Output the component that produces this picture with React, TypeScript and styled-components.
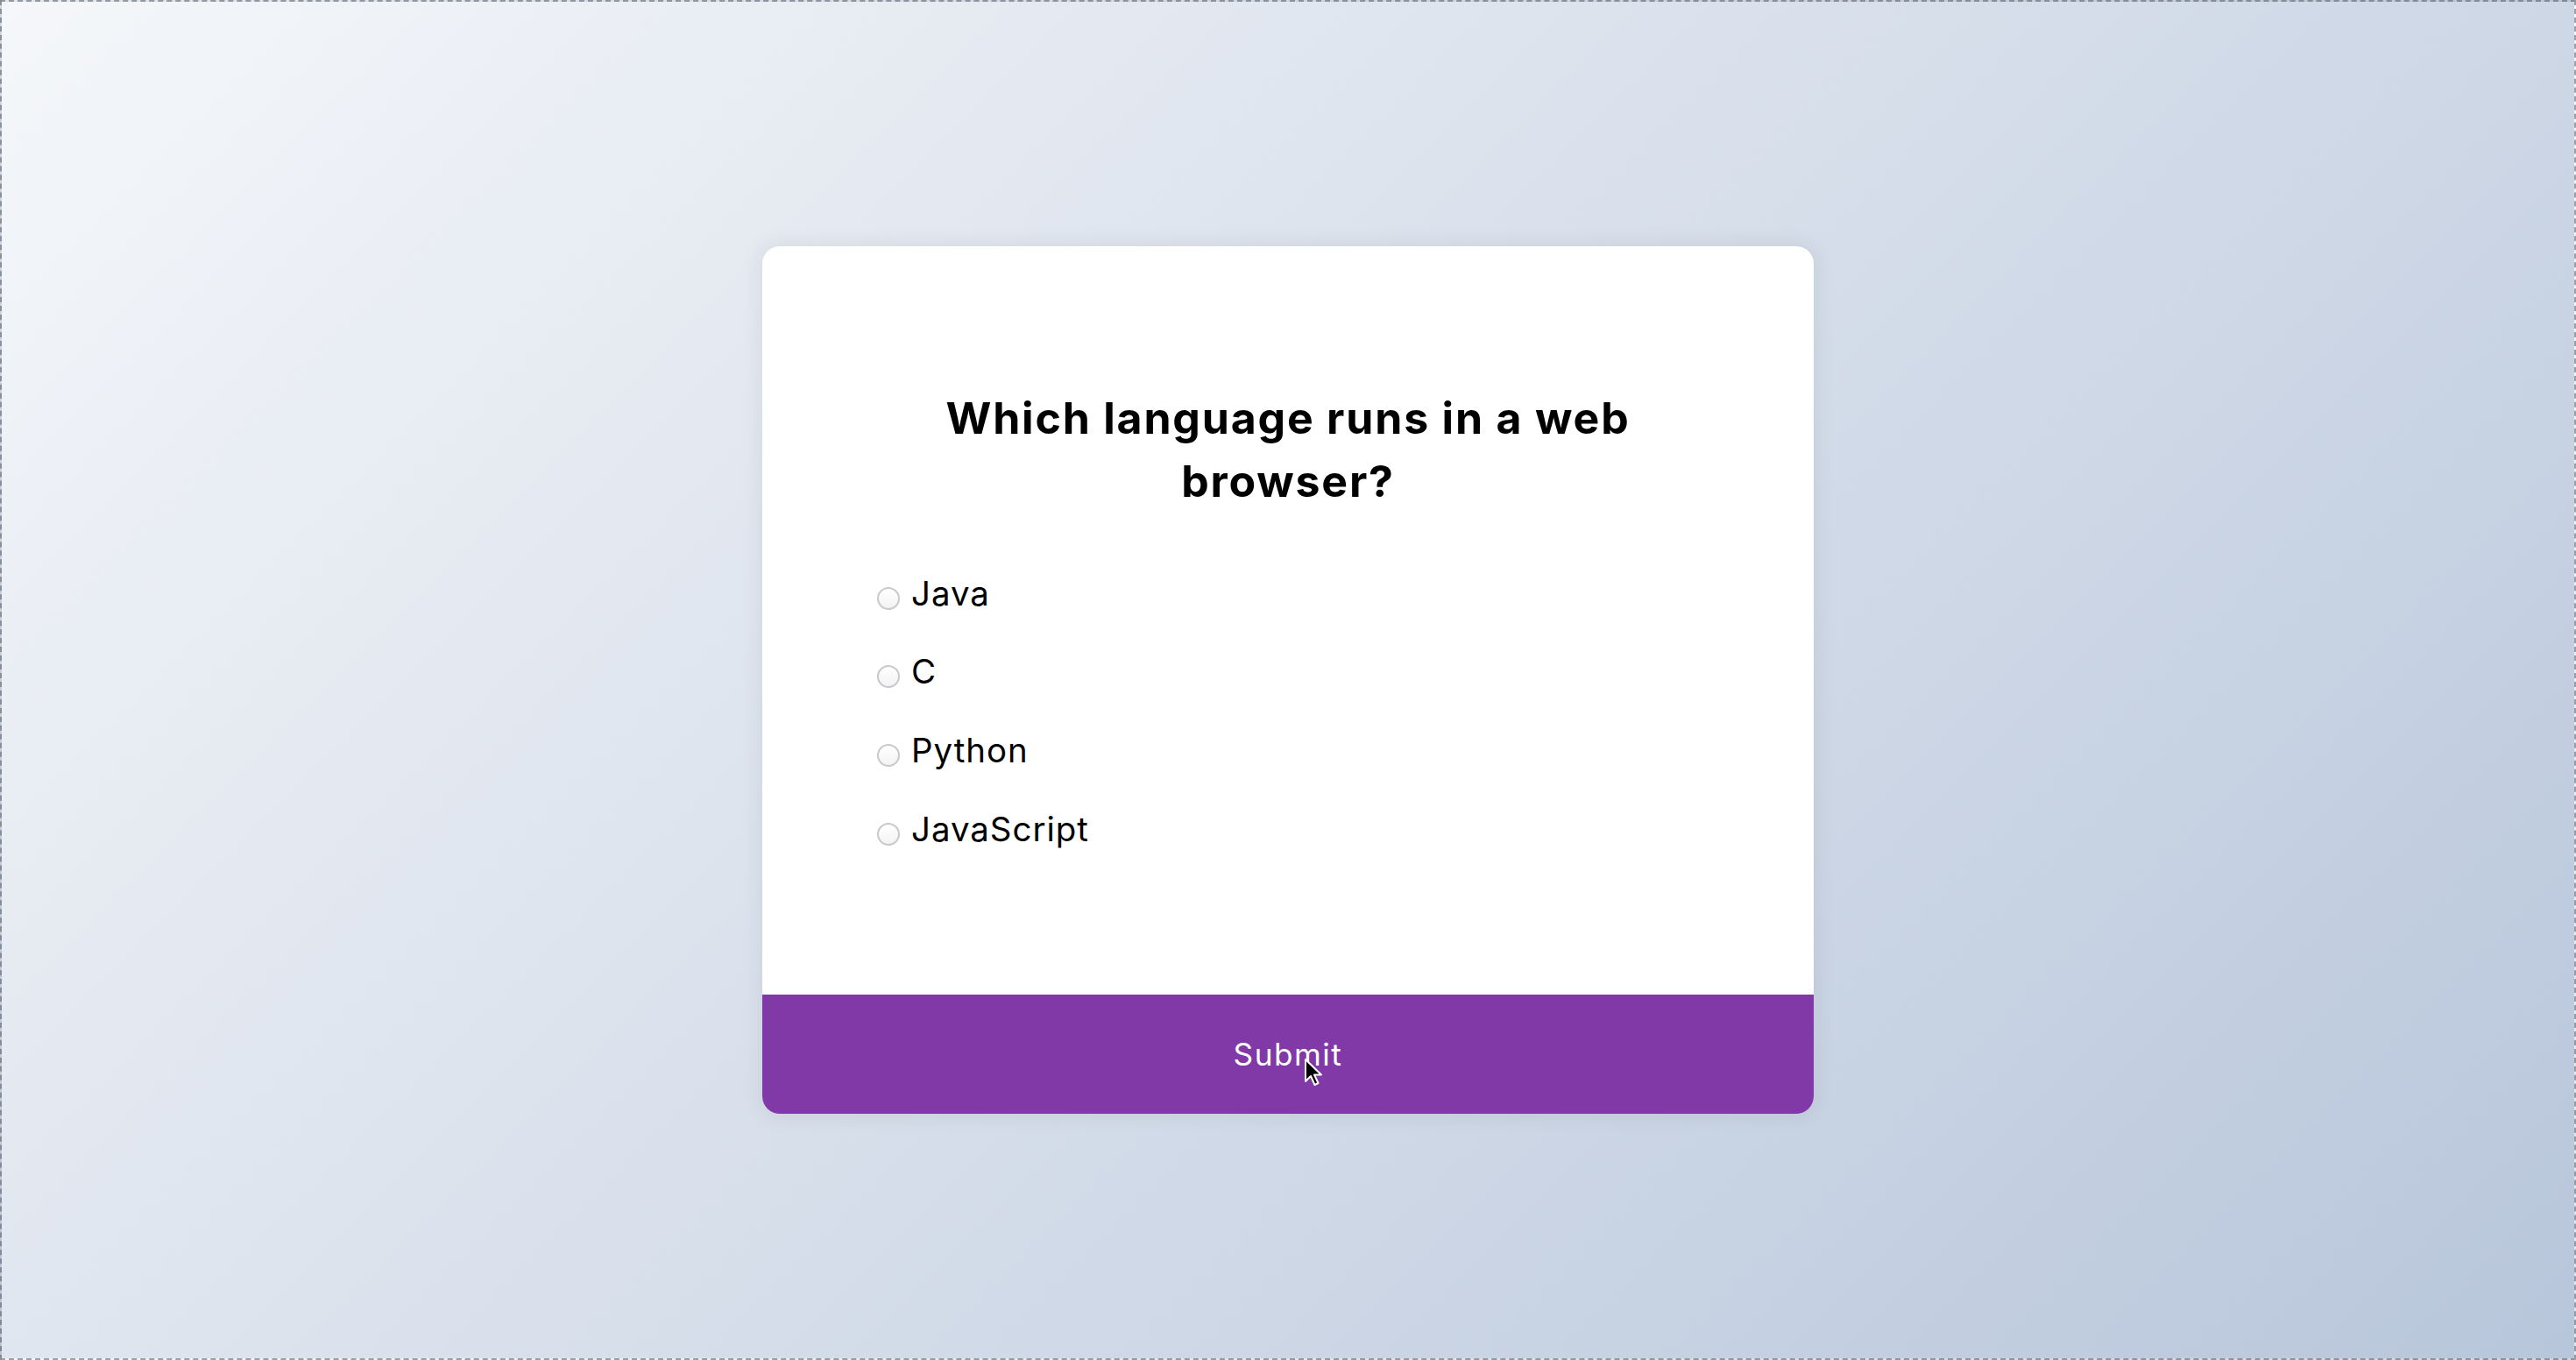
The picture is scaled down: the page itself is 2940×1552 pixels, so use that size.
import styled, { createGlobalStyle } from "styled-components";
import { useState } from "react";

const GlobalStyle = createGlobalStyle`
    * {
        box-sizing: border-box;
    }
    html, body {
        margin: 0;
        height: 100%;
        overflow: hidden;
    }
    body {
        font-family: "Inter", "Open Sans", sans-serif;
    }
`;

const Page = styled.div`
    height: 100vh;
    display: flex;
    justify-content: center;
    align-items: center;
    background-color: #b8c6db;
    background-image: linear-gradient(315deg, #b8c6db 0%, #f5f7fa 100%);
    border: 2px dashed rgba(90, 90, 90, 0.55);
`;

const QuizContainer = styled.div`
    position: relative;
    background-color: #fff;
    border-radius: 20px;
    box-shadow: 0 0 20px 4px rgba(100, 100, 100, 0.1);
    width: 1200px;
    overflow: hidden;
`;

const QuizHeader = styled.div`
    padding: 128px;
`;

const Question = styled.h2`
    margin: 0;
    padding: 32px;
    text-align: center;
    font-size: 50px;
    line-height: 72px;
    font-weight: 700;
    color: #000;
    letter-spacing: 1.8px;
`;

const AnswerList = styled.ul`
    list-style-type: none;
    padding: 0;
    margin: 32px 0;
`;

const AnswerItem = styled.li`
    font-size: 38.4px;
    line-height: 57.6px;
    margin: 32px 0;
    color: #000;
    letter-spacing: 1px;

    & label {
        cursor: pointer;
    }
`;

const Radio = styled.input`
    appearance: none;
    width: 26px;
    height: 26px;
    margin: 6px 13px 0 3px;
    border-radius: 50%;
    border: 2px solid #c9c9cc;
    background: linear-gradient(180deg, #ffffff 0%, #f3f3f5 100%);
    vertical-align: -5px;
    cursor: pointer;

    &:checked {
        border-color: #8e44ad;
        background: radial-gradient(circle, #8e44ad 0 40%, #fff 45%);
    }
`;

const SubmitButton = styled.button`
    display: block;
    width: 100%;
    border: none;
    background-color: #8039a6;
    color: #fff;
    font-family: inherit;
    font-size: 35.2px;
    line-height: 52.8px;
    letter-spacing: 1.5px;
    padding: 41.6px;
    cursor: pointer;
`;

const Cursor = styled.svg`
    position: absolute;
    left: 618px;
    top: 926px;
    width: 24px;
    height: 34px;
    pointer-events: none;
`;

const answers = ["Java", "C", "Python", "JavaScript"];

export default function App() {
    const [picked, setPicked] = useState<string | null>(null);
    return (
        <>
            <GlobalStyle />
            <Page>
                <QuizContainer>
                    <QuizHeader>
                        <Question>Which language runs in a web browser?</Question>
                        <AnswerList>
                            {answers.map((a) => (
                                <AnswerItem key={a}>
                                    <Radio
                                        type="radio"
                                        name="answer"
                                        id={a}
                                        checked={picked === a}
                                        onChange={() => setPicked(a)}
                                    />
                                    <label htmlFor={a}>{a}</label>
                                </AnswerItem>
                            ))}
                        </AnswerList>
                    </QuizHeader>
                    <SubmitButton>Submit</SubmitButton>
                    <Cursor viewBox="0 0 24 34">
                        <path
                            d="M2 2 L2 27 L8 21 L12.5 31 L16.5 29 L12 19.5 L20 19.5 Z"
                            fill="#000"
                            stroke="#fff"
                            strokeWidth="2"
                            strokeLinejoin="round"
                        />
                    </Cursor>
                </QuizContainer>
            </Page>
        </>
    );
}
